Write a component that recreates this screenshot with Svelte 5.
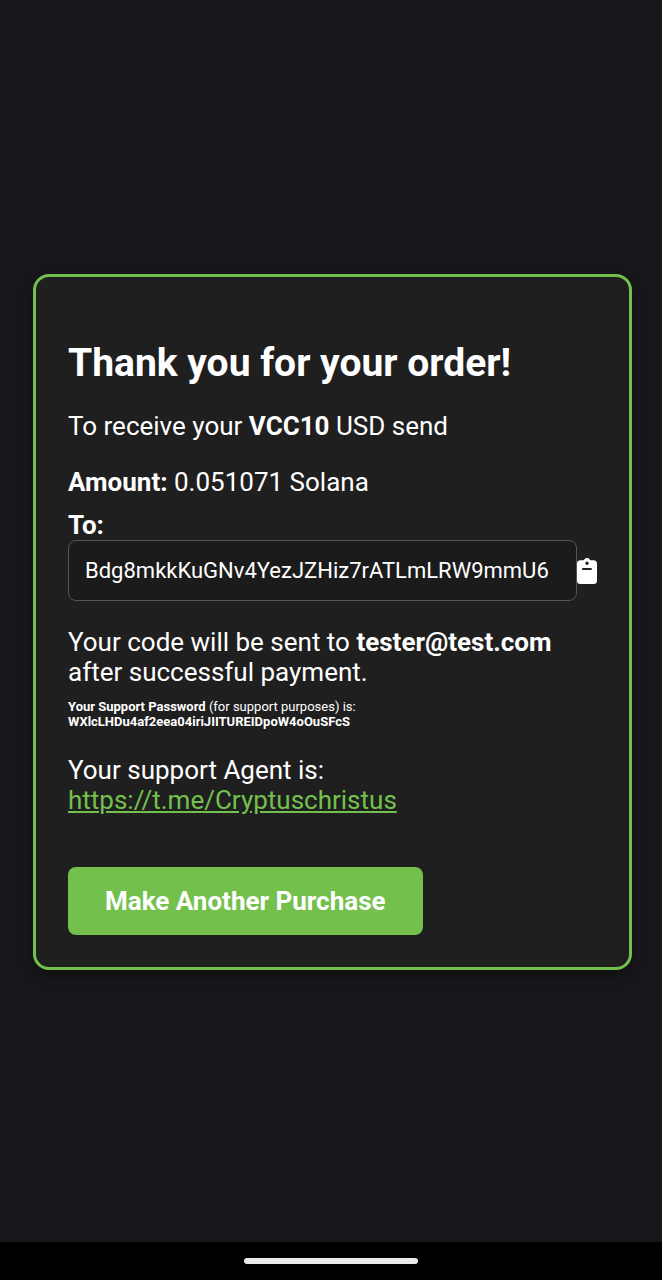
<script lang="ts">
  interface Order {
    product: string;
    amount: string;
    coin: string;
    address: string;
    email: string;
    supportPassword: string;
    agentUrl: string;
  }

  const order: Order = {
    product: "VCC10",
    amount: "0.051071",
    coin: "Solana",
    address: "Bdg8mkkKuGNv4YezJZHiz7rATLmLRW9mmU6",
    email: "tester@test.com",
    supportPassword: "WXlcLHDu4af2eea04iriJIITUREIDpoW4oOuSFcS",
    agentUrl: "https://t.me/Cryptuschristus",
  };

  function copyAddress() {
    navigator.clipboard?.writeText(order.address);
  }
</script>

<div class="screen">
  <main>
    <section class="card">
      <h1>Thank you for your order!</h1>
      <p>To receive your <b>{order.product}</b> USD send</p>
      <p class="amount"><b>Amount:</b> {order.amount} {order.coin}</p>
      <label for="address">To:</label>
      <div class="address">
        <input id="address" type="text" readonly value={order.address} />
        <button class="copy" aria-label="Copy address" onclick={copyAddress}>
          <svg viewBox="0 0 20 26" width="20" height="26">
            <path
              fill="currentColor"
              fill-rule="evenodd"
              d="M3.500 2.300H6C7.200 2.300 7.500 0 10 0s2.800 2.300 4 2.300h2.500a3.500 3.500 0 0 1 3.500 3.500v16.700a3.500 3.500 0 0 1-3.500 3.500h-13A3.500 3.500 0 0 1 0 22.500V5.800a3.500 3.500 0 0 1 3.500-3.500zM10 3.500a1.700 1.700 0 1 0 0 3.400a1.700 1.700 0 1 0 0-3.400zM5.800 10.100a.9.9 0 0 0 0 1.800h8.200a.9.9 0 0 0 0-1.800z"
            />
          </svg>
        </button>
      </div>
      <p>Your code will be sent to <b>{order.email}</b> after successful payment.</p>
      <p class="password">
        <b>Your Support Password</b> (for support purposes) is:<br />
        <b>{order.supportPassword}</b>
      </p>
      <p>Your support Agent is:<br /><a href={order.agentUrl}>{order.agentUrl}</a></p>
      <button class="again">Make Another Purchase</button>
    </section>
  </main>
  <footer><span class="handle"></span></footer>
</div>

<style>
  :global(body) {
    margin: 0;
    background-color: #17171b;
  }

  .screen {
    display: flex;
    flex-direction: column;
    min-height: 100vh;
    color: #fff;
    font-family: Roboto, sans-serif;
    font-size: 26px;
    line-height: 30px;
  }

  main {
    flex: 1;
    display: flex;
    align-items: center;
    padding: 2px 30px 0 33px;
  }

  .card {
    flex: 1;
    min-width: 0;
    box-sizing: border-box;
    padding: 32px;
    border: 3px solid #73c04d;
    border-radius: 16px;
    background-color: #1f1f1f;
    box-shadow: 0 6px 12px rgba(0, 0, 0, 0.3);
  }

  h1 {
    margin: 32px 0 26px;
    font-size: 39px;
    line-height: 44px;
  }

  p {
    margin: 26px 0;
  }

  .amount {
    margin-bottom: 13px;
  }

  label {
    display: block;
    font-weight: bold;
  }

  .address {
    display: flex;
    align-items: center;
  }

  input {
    flex: 1;
    min-width: 0;
    box-sizing: border-box;
    height: 61px;
    padding: 0 16px;
    border: 1px solid #555;
    border-radius: 8px;
    background-color: #1b1b1b;
    color: #fff;
    font: inherit;
    font-size: 22px;
  }

  .copy {
    display: flex;
    padding: 0;
    border: none;
    background: none;
    color: #fff;
  }

  .password {
    margin: -14px 0 26px;
    font-size: 13px;
    line-height: 15px;
  }

  a {
    color: #73c04d;
  }

  .again {
    margin-top: 26px;
    padding: 19px 37px;
    border: none;
    border-radius: 8px;
    background-color: #73c04d;
    color: #fff;
    font: inherit;
    font-weight: bold;
  }

  footer {
    display: flex;
    align-items: center;
    justify-content: center;
    height: 38px;
    background-color: #000;
  }

  .handle {
    width: 174px;
    height: 6px;
    border-radius: 3px;
    background-color: #ebebeb;
  }
</style>
